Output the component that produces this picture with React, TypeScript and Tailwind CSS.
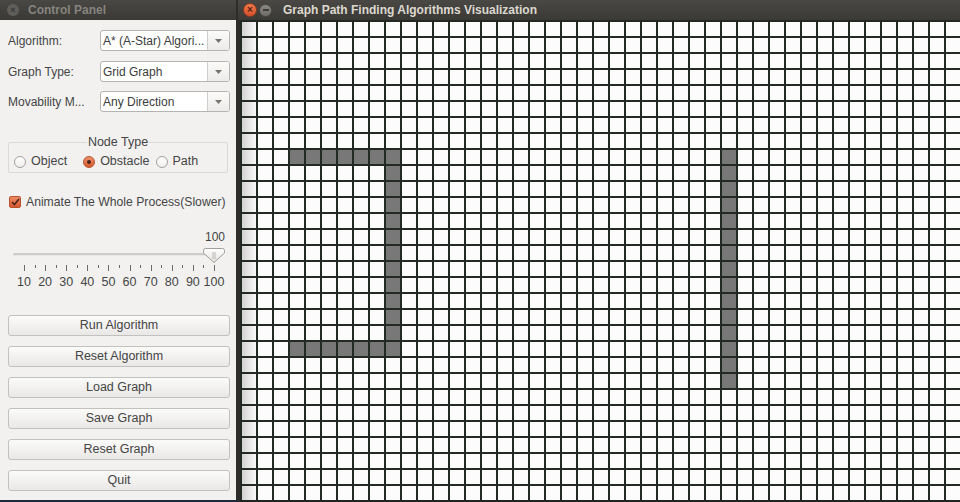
import { useState } from "react";

const COLS = 45;
const ROWS = 30;

// obstacle cells as "row,col"
const OBSTACLES = new Set<string>();
for (let c = 3; c <= 9; c++) {
  OBSTACLES.add(`8,${c}`);
  OBSTACLES.add(`20,${c}`);
}
for (let r = 8; r <= 20; r++) OBSTACLES.add(`${r},9`);
for (let r = 8; r <= 22; r++) OBSTACLES.add(`${r},30`);

const BUTTONS = ["Run Algorithm", "Reset Algorithm", "Load Graph", "Save Graph", "Reset Graph", "Quit"];
const TICKS = Array.from({ length: 19 }, (_, i) => 10 + i * 5);
const LABELS = [10, 20, 30, 40, 50, 60, 70, 80, 90, 100];

function tickX(v: number) {
  return 24 + ((v - 10) / 90) * 190;
}

function Combo({ label, value }: { label: string; value: string }) {
  return (
    <div className="flex items-center h-[21px]">
      <div className="w-[100px] pl-[8px] text-[12px] text-[#454545] whitespace-nowrap">{label}</div>
      <div className="flex h-[21px] w-[130px] rounded-[3px] border border-[#b6b4b0] bg-white overflow-hidden">
        <div className="flex-1 flex items-center pl-[2px] text-[12px] text-[#3c3c3c] whitespace-nowrap overflow-hidden">
          {value}
        </div>
        <div className="w-[22px] flex items-center justify-center border-l border-[#cfcdc9] bg-gradient-to-b from-[#fbfbfa] to-[#ecebe9]">
          <svg width="7" height="4" viewBox="0 0 7 4">
            <path d="M0 0 L7 0 L3.5 4 Z" fill="#77756f" />
          </svg>
        </div>
      </div>
    </div>
  );
}

function Radio({ label, checked, gap }: { label: string; checked?: boolean; gap: string }) {
  return (
    <div className="flex items-center">
      <div
        className={
          checked
            ? "w-[12px] h-[12px] rounded-full border border-[#b5522c] bg-gradient-to-b from-[#f0906a] to-[#d8582d] flex items-center justify-center"
            : "w-[12px] h-[12px] rounded-full border border-[#a3a19c] bg-gradient-to-b from-white to-[#f1f0ee]"
        }
      >
        {checked && <div className="w-[4px] h-[4px] rounded-full bg-[#4a2418]" />}
      </div>
      <span className={`${gap} text-[12.5px] text-[#454545]`}>{label}</span>
    </div>
  );
}

export default function App() {
  const [value] = useState(100);

  return (
    <div className="w-[960px] h-[502px] flex bg-[#1d2a3c] overflow-hidden font-['Liberation_Sans',Arial,sans-serif]">
      {/* Control panel window */}
      <div className="w-[238px] h-[500px] flex flex-col bg-[#f2f1f0] border-r-2 border-[#2e2d2a]">
        <div className="h-[20px] shrink-0 flex items-center bg-gradient-to-b from-[#4a4844] to-[#3a3935]">
          <div className="ml-[7px] w-[12px] h-[12px] rounded-full bg-[#5f5e5a] flex items-center justify-center text-[9px] leading-none text-[#3a3935] font-bold">
            ×
          </div>
          <span className="ml-[9px] text-[12px] font-bold text-[#86847e]">Control Panel</span>
        </div>

        <div className="flex flex-col pt-[10px]">
          <Combo label="Algorithm:" value="A* (A-Star) Algori..." />
          <div className="h-[10px]" />
          <Combo label="Graph Type:" value="Grid Graph" />
          <div className="h-[9px]" />
          <Combo label="Movability M..." value="Any Direction" />

          {/* Node type group */}
          <div className="relative mt-[30px] ml-[8px] w-[220px] h-[31px] border border-[#dcdad6] rounded-[2px] flex items-center pl-[5px]">
            <span className="absolute left-1/2 -translate-x-1/2 top-[-9px] px-[1px] bg-[#f2f1f0] text-[12.5px] text-[#454545] leading-[16px]">
              Node Type
            </span>
            <div className="flex items-center mt-[8px]">
              <Radio label="Object" gap="ml-[5px]" />
              <div className="w-[16px]" />
              <Radio label="Obstacle" checked gap="ml-[5px]" />
              <div className="w-[7px]" />
              <Radio label="Path" gap="ml-[4px]" />
            </div>
          </div>

          {/* Animate checkbox */}
          <div className="mt-[23px] ml-[9px] flex items-center h-[12px]">
            <div className="w-[12px] h-[12px] rounded-[2px] border border-[#b5522c] bg-gradient-to-b from-[#ee8a62] to-[#d9592e] flex items-center justify-center">
              <svg width="9" height="8" viewBox="0 0 9 8">
                <path d="M1 4 L3.5 6.5 L8 1" stroke="#4a2418" strokeWidth="1.6" fill="none" />
              </svg>
            </div>
            <span className="ml-[5px] text-[12.2px] text-[#454545] whitespace-nowrap">Animate The Whole Process(Slower)</span>
          </div>

          {/* Slider */}
          <div className="mt-[22px] h-[85px] relative">
            <span className="absolute left-[205px] top-[0px] text-[12px] text-[#454545] leading-[14px]">{value}</span>
            <div className="absolute left-[13px] top-[23px] w-[210px] h-[3px] rounded-full bg-[#cfcdc9] border-b border-[#e8e7e5]" />
            <svg className="absolute left-[203px] top-[18px]" width="22" height="15" viewBox="0 0 22 15">
              <defs>
                <linearGradient id="hg" x1="0" y1="0" x2="0" y2="1">
                  <stop offset="0" stopColor="#ffffff" />
                  <stop offset="1" stopColor="#e3e2e0" />
                </linearGradient>
              </defs>
              <path d="M2.5 0.5 H19.5 Q21.5 0.5 21.5 2.5 V5 L11 14.5 L0.5 5 V2.5 Q0.5 0.5 2.5 0.5 Z" fill="url(#hg)" stroke="#a19f9a" />
              <path d="M10 4 V11 M12 4 V11" stroke="#b9b7b2" strokeWidth="1" />
            </svg>
            {TICKS.map((t) => (
              <div
                key={t}
                className={`absolute w-px bg-[#6b6a66] top-[35px] ${t % 10 === 0 ? "h-[6px]" : "h-[3px]"}`}
                style={{ left: Math.round(tickX(t)) }}
              />
            ))}
            {LABELS.map((l) => (
              <span
                key={l}
                className="absolute top-[45px] text-[12.5px] text-[#454545] leading-[14px] -translate-x-1/2"
                style={{ left: tickX(l) }}
              >
                {l}
              </span>
            ))}
          </div>

          {/* Buttons */}
          <div className="flex flex-col gap-[10px] px-[8px]">
            {BUTTONS.map((b) => (
              <button
                key={b}
                type="button"
                className="h-[21px] w-[222px] rounded-[3px] border border-[#c3c1bd] bg-gradient-to-b from-[#fbfbfa] to-[#e9e8e6] text-[12.5px] text-[#454545] flex items-center justify-center"
              >
                {b}
              </button>
            ))}
          </div>
        </div>
      </div>

      {/* Visualization window */}
      <div className="flex-1 flex flex-col">
        <div className="h-[20px] shrink-0 flex items-center bg-gradient-to-b from-[#4a4844] to-[#3a3935]">
          <div className="ml-[5px] w-[14px] h-[14px] rounded-full bg-gradient-to-b from-[#f07b4c] to-[#d4502a] border border-[#8e3a1f] flex items-center justify-center text-[10px] leading-none font-bold text-[#5a2514]">
            ×
          </div>
          <div className="ml-[2px] w-[13px] h-[13px] rounded-full bg-gradient-to-b from-[#8a8984] to-[#6d6c68] border border-[#4c4b47] flex items-center justify-center">
            <div className="w-[6px] h-[2px] bg-[#3f3e3a]" />
          </div>
          <span className="ml-[11px] text-[12px] font-bold text-[#dcd8cf] whitespace-nowrap">
            Graph Path Finding Algorithms Visualization
          </span>
        </div>
        <div className="flex-1 border-l-2 border-[#2e2d2a] bg-[#1f241f]">
          <div className="grid grid-cols-[repeat(45,16px)] auto-rows-[16px]">
            {Array.from({ length: ROWS * COLS }, (_, i) => {
              const r = Math.floor(i / COLS);
              const c = i % COLS;
              const obstacle = OBSTACLES.has(`${r},${c}`);
              return (
                <div
                  key={i}
                  className={
                    obstacle
                      ? "border-l-2 border-t-2 border-[#232a23] bg-[#787878]"
                      : c === 0
                        ? "border-l-2 border-t-2 border-[#232a23] bg-gradient-to-r from-[#d2d2d2] to-[#fafafa]"
                        : "border-l-2 border-t-2 border-[#232a23] bg-[#fcfcfc]"
                  }
                />
              );
            })}
          </div>
        </div>
      </div>
    </div>
  );
}
